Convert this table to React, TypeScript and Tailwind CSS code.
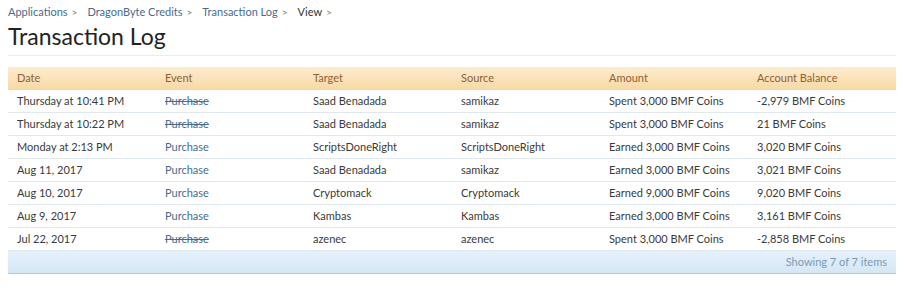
import React from 'react';

interface Txn {
  date: string;
  struck: boolean;
  target: string;
  source: string;
  amount: string;
  balance: string;
}

const rows: Txn[] = [
  { date: 'Thursday at 10:41 PM', struck: true, target: 'Saad Benadada', source: 'samikaz', amount: 'Spent 3,000 BMF Coins', balance: '-2,979 BMF Coins' },
  { date: 'Thursday at 10:22 PM', struck: true, target: 'Saad Benadada', source: 'samikaz', amount: 'Spent 3,000 BMF Coins', balance: '21 BMF Coins' },
  { date: 'Monday at 2:13 PM', struck: false, target: 'ScriptsDoneRight', source: 'ScriptsDoneRight', amount: 'Earned 3,000 BMF Coins', balance: '3,020 BMF Coins' },
  { date: 'Aug 11, 2017', struck: false, target: 'Saad Benadada', source: 'samikaz', amount: 'Earned 3,000 BMF Coins', balance: '3,021 BMF Coins' },
  { date: 'Aug 10, 2017', struck: false, target: 'Cryptomack', source: 'Cryptomack', amount: 'Earned 9,000 BMF Coins', balance: '9,020 BMF Coins' },
  { date: 'Aug 9, 2017', struck: false, target: 'Kambas', source: 'Kambas', amount: 'Earned 3,000 BMF Coins', balance: '3,161 BMF Coins' },
  { date: 'Jul 22, 2017', struck: true, target: 'azenec', source: 'azenec', amount: 'Spent 3,000 BMF Coins', balance: '-2,858 BMF Coins' },
];

const crumbs = ['Applications', 'DragonByte Credits', 'Transaction Log', 'View'];
const headers = ['Date', 'Event', 'Target', 'Source', 'Amount', 'Account Balance'];

export default function App() {
  return (
    <div className="w-[904px] h-[300px] bg-white px-2 pt-[5px] text-[11px] text-[#3a3a3a] [font-family:'Lato','DejaVu_Sans',sans-serif]">
      {/* Breadcrumb */}
      <div className="flex items-center h-[15px]">
        {crumbs.map((c, i) => (
          <span key={c} className="flex items-center mr-[10px]">
            <span className={i === 3 ? 'text-[#333]' : 'text-[#476c8e]'}>{c}</span>
            <span className="ml-[4px] text-[#777] text-[10px]">&gt;</span>
          </span>
        ))}
      </div>

      {/* Title */}
      <h1 className="text-[23px] leading-[32px] text-[#222] pb-[3px] border-b border-[#e6ecf1]">
        Transaction Log
      </h1>

      {/* Table */}
      <div className="mt-[11px] w-[888px]">
        <div className="grid grid-cols-6 h-[23px] items-center bg-gradient-to-b from-[#fdeccf] to-[#f9d8a4] text-[#8d6137]">
          {headers.map((h) => (
            <div key={h} className="pl-[9px]">{h}</div>
          ))}
        </div>
        {rows.map((r, i) => (
          <div key={i} className="grid grid-cols-6 h-[23px] items-center border-b border-[#e0e9f0] last:h-[24px]">
            <div className="pl-[9px]">{r.date}</div>
            <div className={`pl-[9px] text-[#476c8e] ${r.struck ? 'line-through' : ''}`}>Purchase</div>
            <div className="pl-[9px]">{r.target}</div>
            <div className="pl-[9px]">{r.source}</div>
            <div className="pl-[9px]">{r.amount}</div>
            <div className="pl-[9px]">{r.balance}</div>
          </div>
        ))}
        <div className="h-[23px] flex items-center justify-end pr-[9px] bg-gradient-to-b from-[#e5f1fb] to-[#d5e7f5] border-b border-[#b3cbe0] text-[#7b9ab6]">
          Showing 7 of 7 items
        </div>
      </div>
    </div>
  );
}
